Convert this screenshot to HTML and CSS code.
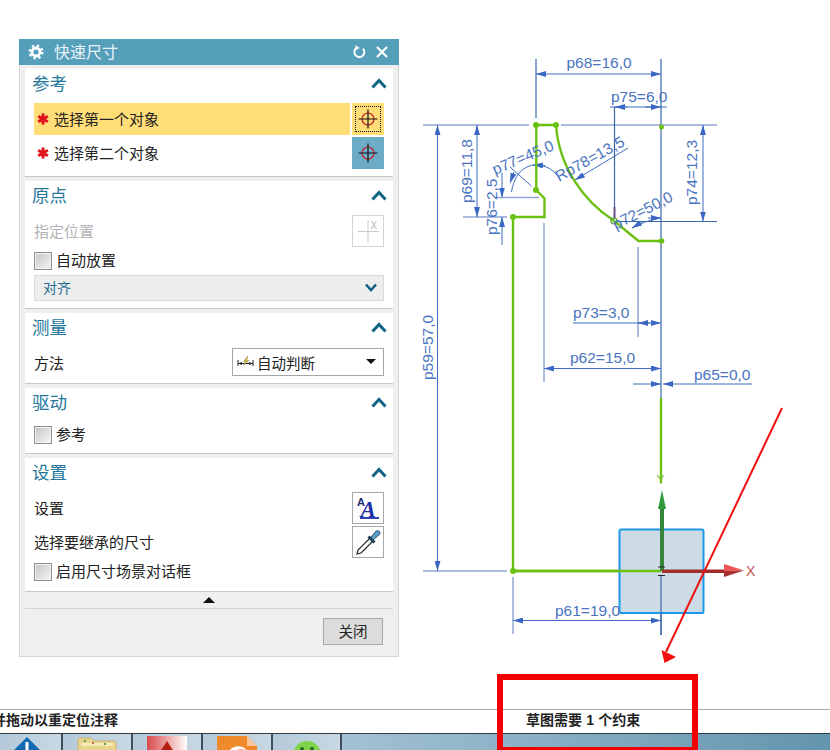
FILE: index.html
```html
<!DOCTYPE html>
<html lang="zh-CN">
<head>
  <meta charset="UTF-8" />
  <title>快速尺寸</title>
  <link rel="stylesheet" href="styles.css">
</head>
<body>
  <svg class="defs" width="0" height="0">
    <defs>
      <marker id="dimArrow" viewBox="0 0 10 6" refX="10" refY="3" markerWidth="10" markerHeight="6" markerUnits="userSpaceOnUse" orient="auto-start-reverse">
        <path d="M0 0L10 3L0 6Z" fill="#3a66c4"/>
      </marker>
      <symbol id="chevUp" viewBox="0 0 16 12"><path d="M1.5 9.5L8 2.5L14.5 9.5" fill="none" stroke="#0e6482" stroke-width="3"/></symbol>
      <symbol id="chevDown" viewBox="0 0 16 12"><path d="M3 2.5L8 8L13 2.5" fill="none" stroke="#0e6482" stroke-width="2.6"/></symbol>
      <symbol id="star" viewBox="0 0 12 12">
        <path d="M6 0.5V11.5M1.2 3.2L10.8 8.8M10.8 3.2L1.2 8.8" stroke="#e0141c" stroke-width="3" fill="none"/>
      </symbol>
      <symbol id="target" viewBox="0 0 32 32">
        <circle cx="16" cy="16" r="6" fill="none" stroke="#c4202a" stroke-width="1.2"/>
        <path d="M6.5 16H25.5M16 6.5V25.5" stroke="#111" stroke-width="1.2"/>
      </symbol>
    </defs>
  </svg>

  <div class="workspace">
    <svg class="sketch" width="830" height="709" viewBox="0 0 830 709">
      <!-- witness lines -->
      <g class="wit">
        <path d="M423 125H529M561 125H717"/>
        <path d="M423 571H507"/>
        <path d="M463 217H507"/>
        <path d="M495 197.5H539"/>
        <path d="M544 223V382"/>
        <path d="M638 247V337"/>
        <path d="M513 577V634"/>
      </g>
      <g class="dark">
        <path d="M536 59V118"/>
        <path d="M661 59V398"/>
        <path d="M661 575V635"/>
        <path d="M614.5 107V207"/>
        <path d="M615 221.5H717"/>
      </g>

      <!-- dimensions -->
      <g class="dim">
        <path d="M536 74H661" marker-start="url(#dimArrow)" marker-end="url(#dimArrow)"/>
        <path d="M610 107H667"/>
        <path d="M627 107H615" marker-end="url(#dimArrow)"/>
        <path d="M645 107H661" marker-end="url(#dimArrow)"/>
        <path d="M703 125V221.5" marker-start="url(#dimArrow)" marker-end="url(#dimArrow)"/>
        <path d="M477 125V217" marker-start="url(#dimArrow)" marker-end="url(#dimArrow)"/>
        <path d="M437.5 125V571" marker-start="url(#dimArrow)" marker-end="url(#dimArrow)"/>
        <path d="M502 173V197.5" marker-end="url(#dimArrow)"/>
        <path d="M502 245V217" marker-end="url(#dimArrow)"/>
        <path d="M573 323H661" marker-end="url(#dimArrow)"/>
        <path d="M650 323H638" marker-end="url(#dimArrow)"/>
        <path d="M544 368.5H661" marker-start="url(#dimArrow)" marker-end="url(#dimArrow)"/>
        <path d="M633 384H661" marker-end="url(#dimArrow)"/>
        <path d="M752 384H663" marker-end="url(#dimArrow)"/>
        <path d="M513 620.5H661" marker-start="url(#dimArrow)" marker-end="url(#dimArrow)"/>
        <path d="M510 167L531.5 186"/>
        <path d="M511.5 192C514 176 523 165 536 165C545 165 552 169 557 175"/>
        <path d="M545 165.5L533 165" marker-end="url(#dimArrow)"/>
        <path d="M514 172L510 183" marker-end="url(#dimArrow)"/>
        <path d="M628 148L575 180" marker-end="url(#dimArrow)"/>
        <path d="M632 228C640 224 648 220 661 218" />
        <path d="M642 222L632 228" marker-end="url(#dimArrow)"/>
        <path d="M648 218L661 218" marker-end="url(#dimArrow)"/>
      </g>

      <!-- sketch -->
      <g class="profile">
        <path d="M661 398V483"/>
        <path d="M513 571V217H544.5V198.5L536.3 190V125H556C559 168 585 202 613 220L638.5 241H661"/>
        <path d="M513 571H661"/>
      </g>
      <path d="M614.5 207V219" stroke="#6b4a8a" stroke-width="2" fill="none"/>
      <g fill="#6cc012">
        <circle cx="536" cy="125" r="3"/>
        <circle cx="556" cy="125" r="3"/>
        <circle cx="661.5" cy="127" r="2.5"/>
        <circle cx="536" cy="190" r="3"/>
        <circle cx="513" cy="217" r="3"/>
        <circle cx="661.5" cy="241" r="2.8"/>
        <circle cx="513" cy="571" r="3"/>
        <circle cx="614" cy="221" r="3" fill="none" stroke="#55a030" stroke-width="1.2"/>
      </g>

      <!-- origin plane and axes -->
      <rect class="plane" x="619.5" y="529.5" width="84" height="83.5" rx="1.5"/>
      <path d="M661 575V635" class="darkline"/>
      <path d="M513 571H661" class="greenline"/>
      <text class="axis-y" x="656.5" y="484">Y</text>
      <path d="M660 571V507H664V571Z" fill="#35863c"/>
      <path d="M662 490L666 509H658Z" fill="#2f9a3d"/>
      <path d="M662 569.5H724V573H662Z" fill="#a02c2c"/>
      <path d="M744 570.5L724 564V571Z" fill="#ee5454"/>
      <path d="M744 570.5L724 577V571Z" fill="#a83030"/>
      <path d="M658 567H665M658 575.5H665" stroke="#222" stroke-width="1.2"/>
      <text class="axis" x="746" y="576">X</text>

      <!-- labels -->
      <g class="lbl">
        <text x="566.5" y="68">p68=16,0</text>
        <text x="611" y="101.5">p75=6,0</text>
        <text x="573" y="318">p73=3,0</text>
        <text x="570" y="363">p62=15,0</text>
        <text x="694" y="380">p65=0,0</text>
        <text x="555" y="615.5">p61=19,0</text>
        <text transform="translate(697 205) rotate(-90)">p74=12,3</text>
        <text transform="translate(472 203) rotate(-90)">p69=11,8</text>
        <text transform="translate(432.5 380) rotate(-90)">p59=57,0</text>
        <text transform="translate(497 235) rotate(-90)">p76=2,5</text>
        <text transform="translate(495 175) rotate(-23)">p77=45,0</text>
        <text transform="translate(559 182) rotate(-29)">Rp78=13,5</text>
        <text transform="translate(616 230) rotate(-27)">p72=50,0</text>
      </g>

      <!-- hand drawn note -->
      <path d="M782 408L666 652" stroke="#f01010" stroke-width="2" fill="none"/>
      <path d="M661.5 650L676 657L664.5 663Z" fill="#f01010"/>
    </svg>

    <div class="panel">
      <div class="title-bar">
        <svg class="gear" width="16" height="16" viewBox="0 0 16 16">
          <circle cx="8" cy="8" r="6.3" fill="none" stroke="#fff" stroke-width="2.4" stroke-dasharray="2.4 2.55"/>
          <circle cx="8" cy="8" r="4" fill="none" stroke="#fff" stroke-width="2.8"/>
        </svg>
        <span class="title-text">快速尺寸</span>
        <svg class="title-btn" width="14" height="14" viewBox="0 0 14 14">
          <path d="M5 2.6A5 5 0 1 0 11 3.6" fill="none" stroke="#fff" stroke-width="2"/>
          <path d="M3.5 0L7.5 3L3.5 5.5Z" fill="#fff"/>
        </svg>
        <svg class="title-btn close" width="14" height="14" viewBox="0 0 14 14">
          <path d="M2 2L12 12M12 2L2 12" stroke="#fff" stroke-width="2.2"/>
        </svg>
      </div>

      <div class="sections">
        <section class="sec">
          <div class="sec-head"><span>参考</span><svg width="16" height="12"><use href="#chevUp"/></svg></div>
          <div class="pick-list">
            <div class="pick active">
              <div class="pick-label"><svg class="star" width="12" height="12"><use href="#star"/></svg><span>选择第一个对象</span></div>
              <div class="pick-btn"><span class="dots"></span><svg width="32" height="32"><use href="#target"/></svg></div>
            </div>
            <div class="pick">
              <div class="pick-label"><svg class="star" width="12" height="12"><use href="#star"/></svg><span>选择第二个对象</span></div>
              <div class="pick-btn blue"><svg width="32" height="32"><use href="#target"/></svg></div>
            </div>
          </div>
        </section>

        <section class="sec origin">
          <div class="sec-head"><span>原点</span><svg width="16" height="12"><use href="#chevUp"/></svg></div>
          <div class="line-row muted">
            <span>指定位置</span>
            <div class="tool-btn pale">
              <svg width="30" height="30" viewBox="0 0 30 30">
                <path d="M5 15.5H13M17 15.5H26M15 4V13M15 18V27" stroke="#c8c8c8" stroke-width="1" fill="none"/>
                <circle cx="15" cy="15.5" r="1.3" fill="#bbb"/>
                <text class="x-mark" x="17.5" y="13">X</text>
              </svg>
            </div>
          </div>
          <label class="check top5"><span class="box"></span><span class="check-text">自动放置</span></label>
          <div class="align-bar"><span>对齐</span><svg width="16" height="12"><use href="#chevDown"/></svg></div>
        </section>

        <section class="sec measure">
          <div class="sec-head"><span>测量</span><svg width="16" height="12"><use href="#chevUp"/></svg></div>
          <div class="method-row">
            <span>方法</span>
            <div class="method-select">
              <svg width="17" height="14" viewBox="0 0 17 14">
                <path d="M1 5V11M16 5V11M1 8.5H16" stroke="#222" stroke-width="1" fill="none"/>
                <path d="M1 8.5L5 7V10ZM16 8.5L12 7V10Z" fill="#222"/>
                <path d="M11 1L6.5 6.5H9L6.5 10L12 5.5H9.5Z" fill="#d8c23a" stroke="#8a7a20" stroke-width=".5"/>
              </svg>
              <span class="method-text">自动判断</span>
              <span class="caret"></span>
            </div>
          </div>
        </section>

        <section class="sec drive">
          <div class="sec-head"><span>驱动</span><svg width="16" height="12"><use href="#chevUp"/></svg></div>
          <label class="check top8"><span class="box"></span><span class="check-text">参考</span></label>
        </section>

        <section class="sec settings">
          <div class="sec-head"><span>设置</span><svg width="16" height="12"><use href="#chevUp"/></svg></div>
          <div class="line-row">
            <span>设置</span>
            <div class="tool-btn">
              <svg width="30" height="30" viewBox="0 0 30 30">
                <text class="a-small" x="4" y="13">A</text>
                <text class="a-big" x="7.5" y="23.5">A</text>
                <path d="M7 25H26" stroke="#1c2fa8" stroke-width="1.8"/>
              </svg>
            </div>
          </div>
          <div class="line-row gap2">
            <span>选择要继承的尺寸</span>
            <div class="tool-btn">
              <svg width="30" height="30" viewBox="0 0 30 30">
                <path d="M4 27L5 23L17 11L20 14L8 26Z" fill="#fff" stroke="#222" stroke-width="1.2"/>
                <path d="M15.5 9.5L21.5 15.5" stroke="#1d3f5a" stroke-width="3"/>
                <path d="M18 10L23 4Q25 3 26.5 4.5Q28 6 26 8L20 13Z" fill="#5a9ccb" stroke="#1d3f5a" stroke-width=".8"/>
              </svg>
            </div>
          </div>
          <label class="check top5"><span class="box"></span><span class="check-text">启用尺寸场景对话框</span></label>
        </section>
      </div>

      <div class="more"><span class="caret-up"></span></div>
      <div class="footer"><button class="close-btn">关闭</button></div>
    </div>
  </div>

  <div class="status">
    <span class="status-left">并拖动以重定位注释</span>
    <span class="status-right">草图需要 <b>1</b> 个约束</span>
  </div>

  <div class="taskbar">
    <div class="task first">
      <svg width="40" height="30" viewBox="0 0 40 30">
        <path d="M20 1L37 18H29V30H11V18H3Z" fill="#1368b4"/>
        <path d="M20 6V30M14 16H26" stroke="#fff" stroke-width="3"/>
      </svg>
    </div>
    <div class="task">
      <svg width="40" height="30" viewBox="0 0 40 30">
        <path d="M1 3Q1 2 3 2H14L17 5H37Q39 5 39 7V30H1Z" fill="#e9d48e" stroke="#c8b26a"/>
        <path d="M4 7H36V10H4Z" fill="#f6e9b8"/>
        <circle cx="8" cy="5" r="1" fill="#3c8a3c"/><circle cx="16" cy="7" r="1" fill="#c04030"/><circle cx="28" cy="8" r="1" fill="#3c8a3c"/>
      </svg>
    </div>
    <div class="task">
      <div class="red-app"><span class="red-peak"></span></div>
    </div>
    <div class="task">
      <svg width="40" height="30" viewBox="0 0 40 30">
        <path d="M0 0H30L40 10V30H0Z" fill="#ee8a2c"/>
        <path d="M30 0L40 10H30Z" fill="#f8c79a"/>
        <path d="M11 17C14 9 26 8 30 15C24 12 18 13 16 19Z" fill="#fff"/>
        <path d="M16 22C20 17 26 17 30 20C25 20 22 22 21 27Z" fill="#fff"/>
      </svg>
    </div>
    <div class="task last">
      <svg width="40" height="30" viewBox="0 0 40 30">
        <circle cx="20" cy="19" r="14" fill="#7ed44a"/>
        <circle cx="15" cy="13" r="2" fill="#1f6a1f"/>
        <circle cx="25" cy="13" r="2" fill="#1f6a1f"/>
      </svg>
    </div>
  </div>

  <div class="red-box"></div>
</body>
</html>
```

FILE: styles.css
```css
* {
  margin: 0;
  padding: 0;
  box-sizing: border-box;
}
html, body {
  height: 750px;
  overflow: hidden;
}
body {
  position: relative;
  width: 830px;
  background: #fff;
  font-family: "Noto Sans CJK SC", "Liberation Sans", sans-serif;
  font-size: 14px;
  color: #222;
}
.defs {
  position: absolute;
}

.workspace {
  position: relative;
  height: 709px;
}
.sketch {
  position: absolute;
  left: 0;
  top: 0;
}

/* sketch strokes */
.wit path {
  stroke: #8fa6d6;
  stroke-width: 1.5;
  fill: none;
}
.dark path {
  stroke: #3b66ad;
  stroke-width: 1.2;
  fill: none;
}
.dim path {
  stroke: #3f6cc2;
  stroke-width: 1;
  fill: none;
}
.profile path {
  stroke: #6cc012;
  stroke-width: 2.4;
  fill: none;
}
.plane {
  fill: #cddbe6;
  stroke: #1a98ea;
  stroke-width: 2;
}
.darkline {
  stroke: #3b66ad;
  stroke-width: 1.2;
}
.greenline {
  stroke: #6cc012;
  stroke-width: 2.4;
}
.lbl text {
  font-family: "Liberation Sans", sans-serif;
  font-size: 15.5px;
  fill: #4a74c2;
}
.axis {
  font-family: "Liberation Sans", sans-serif;
  font-size: 14px;
  fill: #c25555;
}
.axis-y {
  font-family: "Liberation Sans", sans-serif;
  font-size: 12px;
  fill: #7ac142;
}

/* dialog */
.panel {
  position: absolute;
  left: 19px;
  top: 39px;
  width: 380px;
  height: 618px;
  background: #efefef;
  border: 1px solid #d6d6d6;
  border-top: none;
}
.title-bar {
  display: flex;
  align-items: center;
  height: 26px;
  margin: 0 -1px;
  padding: 0 10px 0 9px;
  background: #569fbb;
  color: #eaf4f8;
}
.gear {
  margin-right: 10px;
}
.title-text {
  flex: 1;
  padding-bottom: 2px;
  font-size: 16px;
}
.title-btn {
  margin-left: 9px;
}
.sections {
  display: flex;
  flex-direction: column;
  gap: 4px;
  padding: 4px 5px 0;
}
.sec {
  padding: 0 9px 7px;
  background: #fff;
  border-bottom: 1px solid #c8c8c8;
}
.sec-head {
  display: flex;
  justify-content: space-between;
  align-items: center;
  height: 30px;
  margin: 0 -3px 0 -2px;
  font-size: 17.5px;
  color: #24779b;
}
.sec-head span {
  padding-bottom: 4px;
}
.sec-head svg {
  margin-bottom: 1px;
}
.pick-list {
  display: flex;
  flex-direction: column;
  gap: 2px;
  margin-top: 4px;
}
.pick {
  display: flex;
  gap: 2px;
  height: 32px;
}
.pick-label {
  flex: 1;
  display: flex;
  align-items: center;
  gap: 5px;
  padding-left: 3px;
  font-size: 15px;
}
.pick-label span {
  padding-bottom: 2px;
}
.pick.active .pick-label,
.pick.active .pick-btn {
  background: #ffdd77;
}
.pick-btn {
  position: relative;
  width: 32px;
  height: 32px;
}
.pick-btn.blue {
  background: #6cacc6;
}
.dots {
  position: absolute;
  inset: 3px;
  border: 1px dotted #111;
}
.star {
  flex: none;
}
.line-row {
  display: flex;
  justify-content: space-between;
  align-items: center;
  margin-top: 4px;
  font-size: 15px;
}
.line-row span {
  padding-bottom: 2px;
}
.line-row.gap2 {
  margin-top: 2px;
}
.line-row.muted {
  color: #b2b2b2;
}
.tool-btn {
  width: 32px;
  height: 32px;
  border: 1px solid #a8a8a8;
  background: #fff;
}
.tool-btn.pale {
  border-color: #d4d4d4;
}
.x-mark {
  font-family: "Liberation Sans", sans-serif;
  font-size: 10px;
  fill: #b5b5b5;
}
.a-small {
  font-family: "Liberation Sans", sans-serif;
  font-weight: bold;
  font-size: 11px;
  fill: #1a2a70;
}
.a-big {
  font-family: "Liberation Serif", serif;
  font-weight: bold;
  font-style: italic;
  font-size: 23px;
  fill: #1c2fa8;
}
.check {
  display: flex;
  align-items: center;
  gap: 4px;
  height: 18px;
  font-size: 15px;
}
.check-text {
  margin-bottom: 4px;
}
.check.top5 {
  margin-top: 5px;
}
.check.top8 {
  margin-top: 8px;
}
.box {
  flex: none;
  width: 18px;
  height: 18px;
  border: 1px solid #8f8f8f;
  background: linear-gradient(135deg, #c4c4c4, #f6f6f6);
  box-shadow: inset 0 0 0 1px #f2f2f2;
}
.align-bar {
  display: flex;
  justify-content: space-between;
  align-items: center;
  height: 26px;
  margin-top: 5px;
  padding: 0 4px 0 8px;
  background: #eeeeee;
  border: 1px solid #d8d8d8;
  color: #1d6d8e;
  font-size: 14px;
}
.align-bar span {
  padding-bottom: 2px;
}
.method-row {
  display: flex;
  justify-content: space-between;
  align-items: center;
  margin-top: 5px;
  font-size: 15px;
}
.method-select {
  display: flex;
  align-items: center;
  gap: 3px;
  width: 152px;
  height: 28px;
  padding: 0 7px 0 4px;
  background: #fff;
  border: 1px solid #a6a6a6;
  font-size: 14.5px;
}
.method-text {
  flex: 1;
}
.caret {
  width: 0;
  height: 0;
  margin-bottom: 2px;
  border-left: 5px solid transparent;
  border-right: 5px solid transparent;
  border-top: 5px solid #111;
}
.drive {
  padding-bottom: 9px;
}
.settings {
  padding-bottom: 10px;
}
.more {
  display: flex;
  justify-content: center;
  align-items: center;
  height: 17px;
  border-bottom: 1px solid #d4d4d4;
  margin: 0 5px;
}
.caret-up {
  width: 0;
  height: 0;
  border-left: 6px solid transparent;
  border-right: 6px solid transparent;
  border-bottom: 6px solid #111;
}
.footer {
  display: flex;
  justify-content: flex-end;
  padding: 9px 15px 0 0;
}
.close-btn {
  width: 60px;
  height: 27px;
  padding-bottom: 2px;
  background: #dcdcdc;
  border: 1px solid #a8a8a8;
  font-family: inherit;
  font-size: 14.5px;
  color: #222;
}

/* bottom of the window */
.status {
  position: relative;
  height: 24px;
  background: #fff;
  border-top: 1px solid #a9a9a9;
  font-size: 14px;
  font-weight: bold;
  line-height: 19px;
  color: #222;
  overflow: hidden;
}
.status-left {
  position: absolute;
  left: -8px;
  top: 0;
}
.status-right {
  position: absolute;
  left: 526px;
  top: 0;
  word-spacing: 1px;
}
.status-right b {
  font-family: "Liberation Sans", sans-serif;
}
.taskbar {
  display: flex;
  height: 17px;
  overflow: hidden;
  background: linear-gradient(90deg, #a4c2d5 40%, #6395ad);
  border-top: 1px solid #2e3a44;
}
.task {
  display: flex;
  justify-content: center;
  width: 70px;
  padding-top: 2px;
  background: linear-gradient(90deg, #b4c9d9, #c8d8e4);
  border-right: 2px solid #3e4e5a;
}
.task.first {
  width: 63px;
  padding-right: 8px;
}
.task.last {
  width: 69px;
}
.red-app {
  display: flex;
  justify-content: center;
  width: 40px;
  height: 30px;
  padding-top: 5px;
  background: linear-gradient(90deg, #d84a4a, #fff);
}
.red-peak {
  width: 0;
  height: 0;
  border-left: 9px solid transparent;
  border-right: 9px solid transparent;
  border-bottom: 14px solid #b3200f;
}

/* annotation drawn over the screenshot */
.red-box {
  position: absolute;
  left: 497px;
  top: 674px;
  width: 201px;
  height: 76px;
  border: 6px solid #f00000;
  border-bottom-width: 3px;
  pointer-events: none;
}
```
